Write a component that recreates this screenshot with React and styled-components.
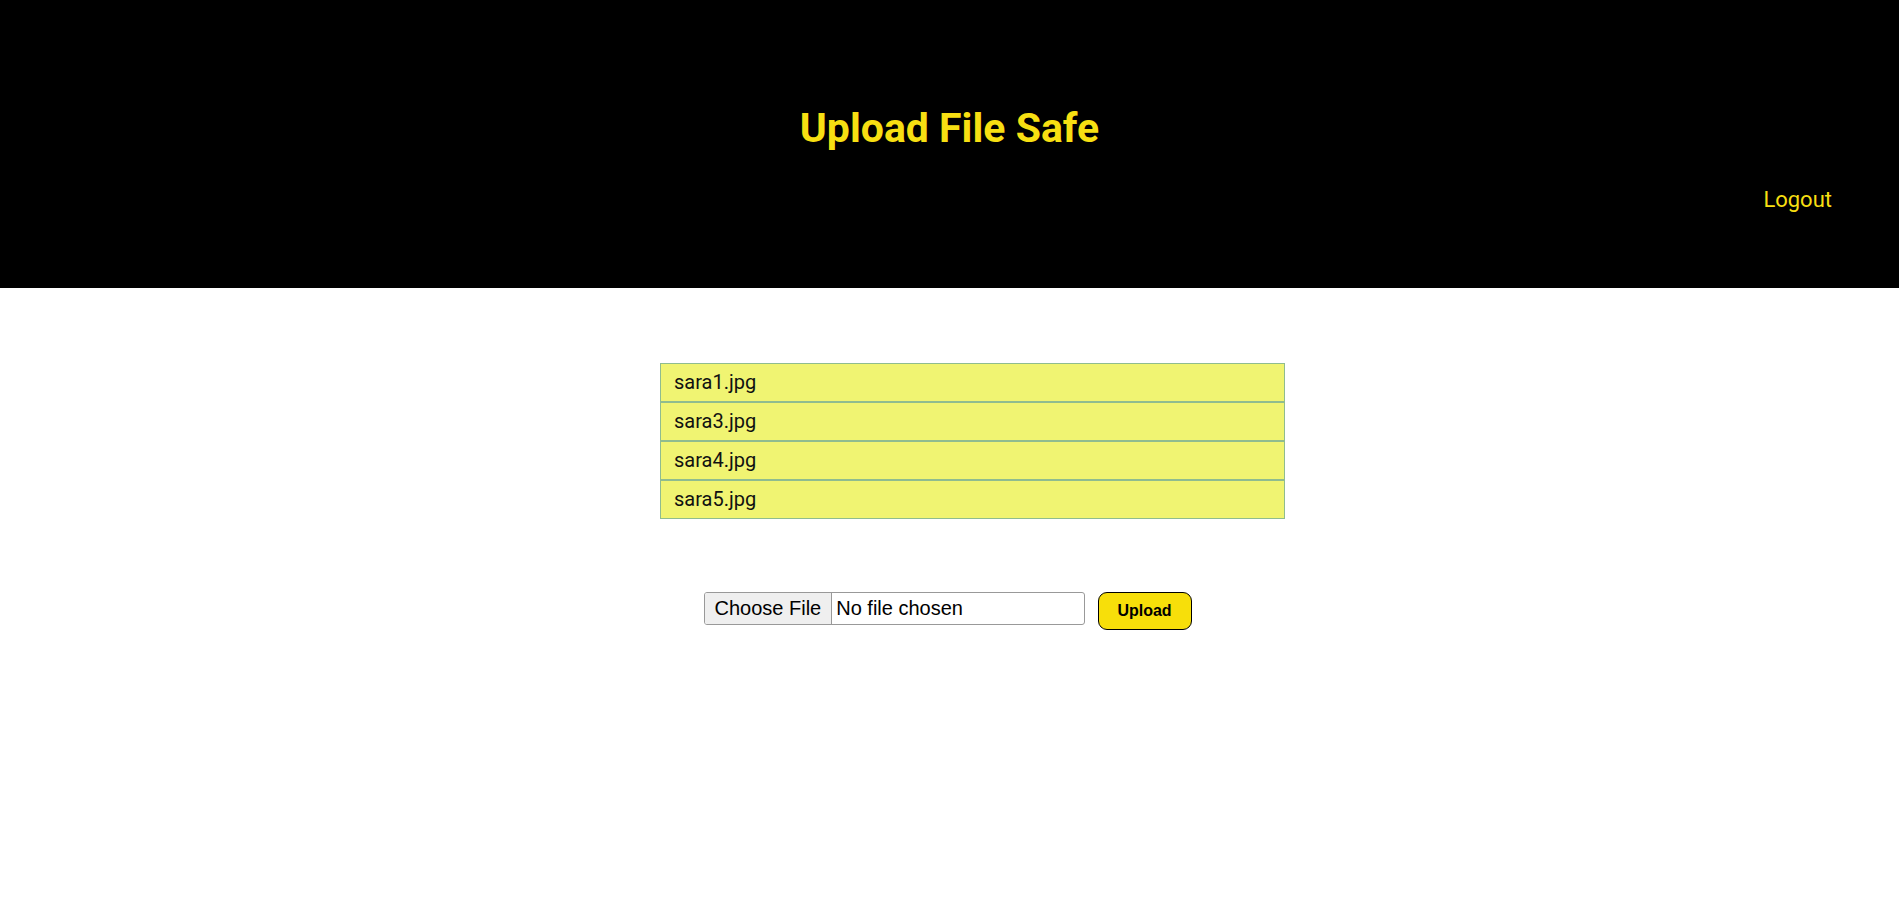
import styled, { createGlobalStyle } from "styled-components";

const GlobalStyle = createGlobalStyle`
  body {
    margin: 0;
    font-family: Roboto, "Liberation Sans", sans-serif;
    background: #fff;
  }
`;

const Header = styled.header`
  background: #000;
  height: 288px;
  display: flex;
  flex-direction: column;
  align-items: center;
  padding-top: 104px;
  box-sizing: border-box;
`;

const Title = styled.h1`
  margin: 0;
  color: #f7df12;
  font-family: Roboto, sans-serif;
  font-weight: 700;
  font-size: 41px;
  line-height: 48px;
`;

const Nav = styled.nav`
  align-self: stretch;
  display: flex;
  justify-content: flex-end;
  padding: 35px 67px 0 0;
`;

const Logout = styled.a`
  color: #f7df12;
  font-size: 22px;
  line-height: 26px;
  text-decoration: none;
  cursor: pointer;
`;

const FileList = styled.ul`
  list-style: none;
  width: 625px;
  margin: 75px auto 0;
  padding: 0 0 0 46px;
`;

const FileItem = styled.li`
  background: #f0f472;
  border: 1px solid #8fbc8f;
  padding: 8px 13px;
  font-size: 20px;
  line-height: 21px;
  color: #111;
`;

const UploadForm = styled.form`
  display: flex;
  justify-content: center;
  align-items: flex-start;
  gap: 13px;
  margin-top: 73px;
  padding-right: 4px;
`;

const FileInput = styled.input`
  width: 381px;
  height: 33px;
  box-sizing: border-box;
  border: 1px solid #999;
  border-radius: 3px;
  font-family: "Liberation Sans", Arial, sans-serif;
  font-size: 20px;
  padding: 0;

  &::file-selector-button {
    height: 100%;
    font: inherit;
    margin: 0 4px 0 0;
    padding: 0 10px;
    border: none;
    border-right: 1px solid #999;
    background: #efefef;
    color: #000;
  }
`;

const UploadButton = styled.button`
  width: 94px;
  height: 38px;
  background: #f7df0a;
  border: 1px solid #000;
  border-radius: 9px;
  font-family: "Liberation Sans", Arial, sans-serif;
  font-weight: 700;
  font-size: 16px;
  color: #000;
  cursor: pointer;
`;

const files = ["sara1.jpg", "sara3.jpg", "sara4.jpg", "sara5.jpg"];

const App = () => {
  return (
    <>
      <GlobalStyle />
      <Header>
        <Title>Upload File Safe</Title>
        <Nav>
          <Logout>Logout</Logout>
        </Nav>
      </Header>
      <FileList>
        {files.map((file) => (
          <FileItem key={file}>{file}</FileItem>
        ))}
      </FileList>
      <UploadForm onSubmit={(e) => e.preventDefault()}>
        <FileInput type="file" />
        <UploadButton type="submit">Upload</UploadButton>
      </UploadForm>
    </>
  );
};

export default App;
